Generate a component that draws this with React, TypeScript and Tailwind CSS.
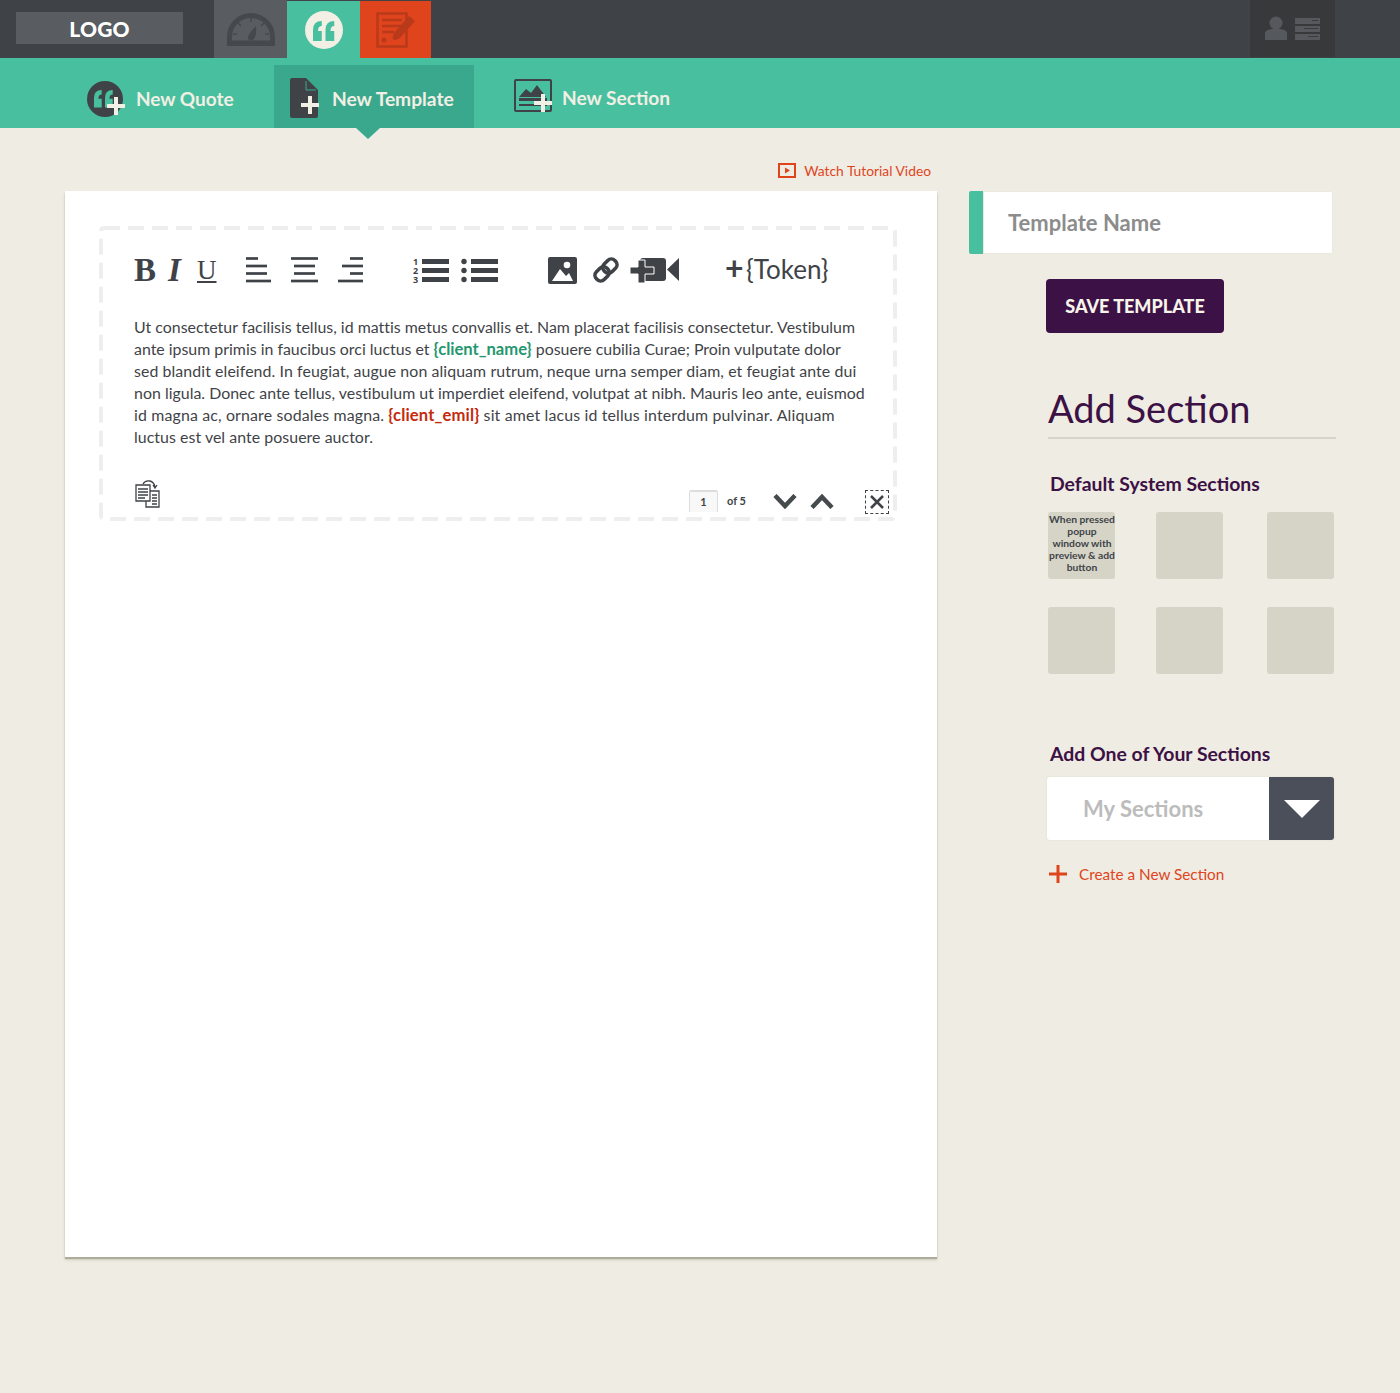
const Quote = ({ x, y, s = 1, fill }: { x: number; y: number; s?: number; fill: string }) => (
  <g transform={`translate(${x} ${y}) scale(${s})`} fill={fill}>
    <path d="M0 16V7Q0 0 7 0V4Q4 4 4 8H7V16Z" />
    <path d="M10 16V7Q10 0 17 0V4Q14 4 14 8H17V16Z" />
  </g>
);

const Gauge = () => (
  <svg width="50" height="34" viewBox="0 0 50 34" fill="none">
    <path d="M3.500 31V25A21.500 21.500 0 0 1 46.500 25V31Z" stroke="#45494d" strokeWidth="5" />
    <path d="M1 29H49V34H1Z" fill="#45494d" />
    <path d="M22 27Q21 23 30 14Q31 25 27 28Q24 29 22 27Z" fill="#45494d" />
    <path d="M25 6V10M12 11L15 14M38 11L35 14M7 22H11M43 22H39" stroke="#45494d" strokeWidth="1.500" />
  </svg>
);

const QuoteTab = () => (
  <svg width="38" height="38" viewBox="0 0 38 38">
    <circle cx="19" cy="19" r="19" fill="#f2efe5" />
    <Quote x={8} y={10} s={1.25} fill="#48c09f" />
  </svg>
);

const DocPencil = () => (
  <svg width="40" height="36" viewBox="0 0 40 36" fill="none">
    <rect x="1.500" y="1.500" width="29" height="33" stroke="#b93a1a" strokeWidth="2.500" />
    <path d="M6 8H26M6 14H26M6 20H18" stroke="#b93a1a" strokeWidth="2.500" />
    <circle cx="8" cy="28" r="2.500" fill="#b93a1a" />
    <path d="M15 30L18 21L33 4L39 9L24 26Z" fill="#b93a1a" />
    <path d="M15 30L16 26L19 29Z" fill="#e0441d" />
  </svg>
);

const WhitePlus = ({ x, y }: { x: number; y: number }) => (
  <path d={`M${x - 2} ${y - 9}h4v7h7v4h-7v7h-4v-7h-7v-4h7z`} fill="#f2efe5" />
);

const NewQuoteIcon = () => (
  <svg width="40" height="38" viewBox="0 0 40 38">
    <circle cx="18" cy="18" r="18" fill="#3f4347" />
    <Quote x={7} y={9} s={1.1} fill="#48c09f" />
    <WhitePlus x={29} y={25} />
  </svg>
);

const NewTemplateIcon = () => (
  <svg width="32" height="40" viewBox="0 0 32 40">
    <path d="M1 2Q1 0 3 0H17L29 12V38Q29 40 27 40H3Q1 40 1 38Z" fill="#3f4347" />
    <path d="M17 3V12H27" fill="none" stroke="#3aa88d" strokeWidth="1" />
    <WhitePlus x={21} y={27} />
  </svg>
);

const NewSectionIcon = () => (
  <svg width="40" height="36" viewBox="0 0 40 36" fill="none">
    <rect x="1" y="1" width="36" height="31" rx="1" stroke="#3f4347" strokeWidth="2" />
    <path d="M5 18L12 10L17 14L23 6L32 18Z" fill="#3f4347" />
    <path d="M5 22H33V19H5ZM5 27H33V25H5Z" fill="#3f4347" />
    <WhitePlus x={29} y={24} />
  </svg>
);

const AccountIcon = () => (
  <svg width="56" height="26" viewBox="0 0 56 26" fill="#55595d">
    <circle cx="11" cy="7" r="6.500" />
    <path d="M0 24V17Q0 14 7 13H15Q22 14 22 17V24Z" />
    <path d="M30 2H55V8H30ZM30 10H55V16H30ZM30 18H55V24H30Z" />
    <path d="M47 4.500H53M39 12.500H53M43 20.500H53" stroke="#3a3b3d" strokeWidth="1.200" />
  </svg>
);

const Lines = ({ rows }: { rows: number[][] }) => (
  <svg width="28" height="26" viewBox="0 0 28 26" stroke="#3f4347" strokeWidth="2.700">
    {rows.map(([a, b], i) => (
      <line key={i} x1={a} x2={b} y1={1.500 + i * 7.500} y2={1.500 + i * 7.500} />
    ))}
  </svg>
);

const NumberedList = () => (
  <svg width="37" height="26" viewBox="0 0 37 26" className="overflow-visible">
    <text x="0" y="8" fontSize="9" fontWeight="700" fill="#3f4347" fontFamily="Open Sans, sans-serif">1</text>
    <text x="0" y="17" fontSize="9" fontWeight="700" fill="#3f4347" fontFamily="Open Sans, sans-serif">2</text>
    <text x="0" y="26" fontSize="9" fontWeight="700" fill="#3f4347" fontFamily="Open Sans, sans-serif">3</text>
    <path d="M9 2H36V7H9ZM9 11H36V16H9ZM9 20H36V25H9Z" fill="#3f4347" />
  </svg>
);

const BulletList = () => (
  <svg width="37" height="26" viewBox="0 0 37 26" fill="#3f4347">
    <circle cx="3" cy="4.500" r="2.700" />
    <circle cx="3" cy="13.500" r="2.700" />
    <circle cx="3" cy="22.500" r="2.700" />
    <path d="M10 2H37V7H10ZM10 11H37V16H10ZM10 20H37V25H10Z" />
  </svg>
);

const ImageIcon = () => (
  <svg width="29" height="27" viewBox="0 0 29 27">
    <rect width="29" height="27" rx="2" fill="#3f4347" />
    <circle cx="19" cy="8" r="3.300" fill="#fff" />
    <path d="M4 24L12 12L18 19L21 16L25 24Z" fill="#fff" />
  </svg>
);

const LinkIcon = () => (
  <svg width="26" height="26" viewBox="0 0 26 26" fill="none" stroke="#3f4347" strokeWidth="3.600">
    <g transform="rotate(-45 13 13)">
      <rect x="0" y="7.500" width="15" height="11" rx="5" />
      <rect x="11" y="7.500" width="15" height="11" rx="5" />
    </g>
  </svg>
);

const VideoPlusIcon = () => (
  <svg width="50" height="26" viewBox="0 0 50 26">
    <rect x="10" y="1" width="26" height="23" rx="3" fill="#3f4347" />
    <path d="M37 12.500L49 1V24Z" fill="#3f4347" />
    <path d="M8 3H15V10H24V17H15V26H8V17H0V10H8Z" fill="#3f4347" stroke="#fff" strokeWidth="1" />
  </svg>
);

const CopyIcon = () => (
  <svg width="26" height="29" viewBox="0 0 26 29" fill="none" stroke="#3f4347" strokeWidth="1.300">
    <path d="M1 5H15V21H1Z" fill="#fff" />
    <path d="M15 11H24V27H11V21" />
    <path d="M3 9H13M3 12H13M3 15H13M3 18H10M17 15H22M17 18H22M17 21H22M17 24H22" />
    <path d="M8 4Q10 0 15 1Q19 2 20 7M18 5L20 8L22 5" />
  </svg>
);

const Chevron = ({ up }: { up?: boolean }) => (
  <svg width="24" height="15" viewBox="0 0 24 15" fill="none" stroke="#454a4d" strokeWidth="4.500">
    <path d={up ? "M2 13.500L12 3L22 13.500" : "M2 1.500L12 12L22 1.500"} />
  </svg>
);

const tiles = ["a", "b", "c", "d", "e", "f"];

export default function App() {
  return (
    <div className="min-h-[1393px] bg-[#efece3] font-['Lato',sans-serif]">
      <header className="h-[58px] bg-[#3f4347] flex">
        <div className="w-[167px] h-[32px] mt-3 ml-4 bg-[#595d61] flex items-center justify-center pt-[1px] text-white font-black text-[21px] tracking-[0.200px]">
          LOGO
        </div>
        <div className="ml-[31px] w-[73px] h-[58px] bg-[#595d61] flex items-center justify-center">
          <Gauge />
        </div>
        <div className="w-[73px] h-[57px] mt-[1px] bg-[#48c09f] flex items-center justify-center">
          <QuoteTab />
        </div>
        <div className="w-[71px] h-[57px] mt-[1px] bg-[#e0441d] flex items-center justify-center">
          <DocPencil />
        </div>
        <div className="ml-auto mr-[65px] w-[85px] h-[57px] bg-[#38393a] flex items-center justify-center">
          <AccountIcon />
        </div>
      </header>

      <nav className="h-[70px] bg-[#48c09f] flex items-end text-[#f2efe5] font-bold text-[19px]">
        <div className="ml-[87px] h-[63px] flex items-center gap-[9px] pt-[6px] w-[187px]">
          <NewQuoteIcon />
          <span>New Quote</span>
        </div>
        <div className="relative h-[63px] w-[200px] bg-[#3aa88d] flex items-center pl-[15px] gap-[11px]">
          <div className="mt-[2px]">
            <NewTemplateIcon />
          </div>
          <span className="mt-[6px] text-[19.200px]">New Template</span>
          <div className="absolute left-[82px] top-[63px] w-0 h-0 border-x-[12px] border-x-transparent border-t-[11px] border-t-[#3aa88d]" />
        </div>
        <div className="ml-[40px] h-[63px] flex items-center gap-[8px]">
          <NewSectionIcon />
          <span className="mt-[4px] text-[19.100px]">New Section</span>
        </div>
      </nav>

      <main className="flex pl-[65px]">
        <div className="w-[872px]">
          <div className="h-[63px] pt-[34px] pr-[6px] flex items-start justify-end gap-[8px] text-[#e0441d] text-[13.800px] leading-[17px]">
            <svg width="18" height="15" viewBox="0 0 18 15" className="mt-[1px]" fill="none">
              <rect x="1" y="1" width="16" height="13" stroke="#e0441d" strokeWidth="2" />
              <path d="M7 4.500L12 7.500L7 10.500Z" fill="#e0441d" />
            </svg>
            <span>Watch Tutorial Video</span>
          </div>
          <section className="h-[1066px] bg-white pl-[34px] pt-[35px] shadow-[0_2px_1px_#aeac9a,0_3px_3px_#d3d1c4]">
            <div className="w-[798px] h-[295px] pl-[35px] pr-[8px] pt-[31px] relative">
              <svg className="absolute inset-0" width="798" height="295" fill="none" stroke="#eeeeee" strokeWidth="4" strokeDasharray="16 8">
                <rect x="2" y="2" width="794" height="291" rx="3" />
              </svg>
              <div className="relative flex items-center h-[26px] text-[#3f4347]">
                <span className="font-['Liberation_Serif',serif] font-bold text-[33px] leading-[26px] w-[34px]">B</span>
                <span className="font-['Liberation_Serif',serif] font-bold italic text-[33px] leading-[26px] w-[29px]">I</span>
                <span className="font-['Liberation_Serif',serif] underline underline-offset-[2px] text-[27px] leading-[26px] w-[48px]">U</span>
                <div className="w-[46px]">
                  <Lines rows={[[1, 13], [1, 22], [1, 22], [1, 26]]} />
                </div>
                <div className="w-[47px]">
                  <Lines rows={[[0, 27], [3, 24], [3, 24], [0, 27]]} />
                </div>
                <div className="w-[75px]">
                  <Lines rows={[[12, 25], [4, 25], [12, 25], [0, 25]]} />
                </div>
                <div className="w-[48px]">
                  <NumberedList />
                </div>
                <div className="w-[87px]">
                  <BulletList />
                </div>
                <div className="w-[45px]">
                  <ImageIcon />
                </div>
                <div className="w-[37px]">
                  <LinkIcon />
                </div>
                <div className="w-[95px]">
                  <VideoPlusIcon />
                </div>
                <span className="text-[32px] leading-[26px] font-bold w-[21px] -mt-[4px]">+</span>
                <span className="text-[26px] leading-[26px] -mt-[2px]">{"{Token}"}</span>
              </div>
              <div className="relative mt-[33px] text-[15.900px] leading-[22px] text-[#3f4347] whitespace-nowrap">
                <p className="tracking-[0.010px]">Ut consectetur facilisis tellus, id mattis metus convallis et. Nam placerat facilisis consectetur. Vestibulum</p>
                <p>
                  ante ipsum primis in faucibus orci luctus et <b className="text-[#25976f] text-[16.600px]">{"{client_name}"}</b> posuere cubilia Curae; Proin vulputate dolor
                </p>
                <p className="tracking-[0.080px]">sed blandit eleifend. In feugiat, augue non aliquam rutrum, neque urna semper diam, et feugiat ante dui</p>
                <p className="tracking-[0.020px]">non ligula. Donec ante tellus, vestibulum ut imperdiet eleifend, volutpat at nibh. Mauris leo ante, euismod</p>
                <p className="tracking-[0.150px]">
                  id magna ac, ornare sodales magna. <b className="text-[#c42a0c] text-[16.600px]">{"{client_emil}"}</b> sit amet lacus id tellus interdum pulvinar. Aliquam
                </p>
                <p className="tracking-[0.050px]">luctus est vel ante posuere auctor.</p>
              </div>
              <div className="relative flex items-end mt-[32px] h-[34px]">
                <div className="ml-[1px] self-start">
                  <CopyIcon />
                </div>
                <div className="ml-auto flex items-center">
                  <div className="w-[29px] h-[22px] border-t-2 border-x border-[#dddddd] bg-[#f8f8f8] rounded-t-[2px] flex items-center justify-center text-[11px] font-bold text-[#3f4347]">
                    1
                  </div>
                  <span className="ml-[9px] w-[46px] text-[11px] font-bold text-[#3f4347]">of 5</span>
                  <Chevron />
                  <div className="w-[13px]" />
                  <Chevron up />
                  <div className="ml-[31px] mt-[2px] w-[24px] h-[24px] border border-dashed border-[#3f4347] flex items-center justify-center">
                    <svg width="14" height="14" viewBox="0 0 14 14" stroke="#3f4347" strokeWidth="2.500">
                      <path d="M1 1L13 13M13 1L1 13" />
                    </svg>
                  </div>
                </div>
              </div>
            </div>
          </section>
        </div>

        <aside className="ml-[32px] w-[367px] pt-[63px]">
          <div className="h-[63px] w-[364px] bg-white rounded-[2px] border-l-[14px] border-l-[#48c09f] shadow-[inset_0_0_0_1px_#ebe8dc] flex items-center pl-[25px] text-[22px] font-bold text-[#8c8c8c]">
            Template Name
          </div>
          <button className="block ml-[77px] mt-[25px] w-[178px] h-[54px] rounded-[4px] bg-[#3c1145] text-[#f7f4ea] font-black text-[18px]">
            SAVE TEMPLATE
          </button>
          <h2 className="ml-[79px] mt-[52px] w-[288px] h-[54px] border-b-2 border-[#d6d4c8] text-[38px] leading-[46px] font-normal text-[#3c1145]">
            Add Section
          </h2>
          <h3 className="ml-[81px] mt-[33px] text-[19.400px] leading-[24px] font-bold text-[#3c1145]">Default System Sections</h3>
          <div className="ml-[79px] mt-[16px] grid grid-cols-[108px_111px_67px] gap-y-[28px]">
            {tiles.map((t, i) => (
              <div
                key={t}
                className="w-[67px] h-[67px] rounded-[3px] bg-[#d5d4c7] text-center text-[#3f4347] font-bold text-[10.300px] leading-[12px] pt-[1px] pl-[1px] whitespace-nowrap"
              >
                {i === 0 ? (
                  <>
                    When pressed
                    <br />
                    popup
                    <br />
                    window with
                    <br />
                    preview &amp; add
                    <br />
                    button
                  </>
                ) : null}
              </div>
            ))}
          </div>
          <h3 className="ml-[81px] mt-[68px] text-[19.400px] leading-[24px] font-bold text-[#3c1145]">Add One of Your Sections</h3>
          <div className="ml-[78px] mt-[11px] w-[287px] h-[63px] rounded-[3px] bg-white shadow-[0_0_2px_#dcd9cb] flex">
            <div className="flex-1 flex items-center pl-[36px] text-[22px] font-bold text-[#bcbcbc]">My Sections</div>
            <div className="w-[65px] bg-[#4a4f5a] rounded-r-[3px] flex items-center justify-center">
              <div className="w-0 h-0 border-x-[18px] border-x-transparent border-t-[18px] border-t-white" />
            </div>
          </div>
          <div className="ml-[80px] mt-[23px] flex items-center gap-[12px] text-[15.300px] text-[#e0441d]">
            <svg width="18" height="18" viewBox="0 0 18 18" fill="#e0441d">
              <path d="M7.500 0H10.500V7.500H18V10.500H10.500V18H7.500V10.500H0V7.500H7.500Z" />
            </svg>
            <span>Create a New Section</span>
          </div>
        </aside>
      </main>
    </div>
  );
}
